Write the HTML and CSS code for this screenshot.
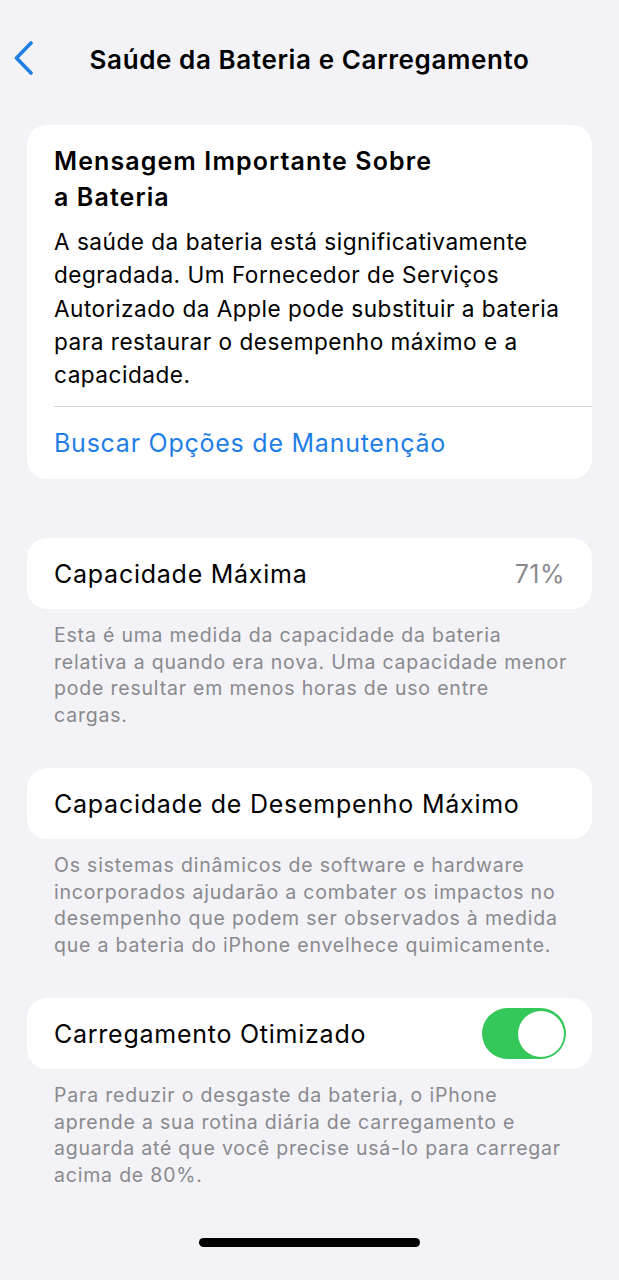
FILE: index.html
```html
<!DOCTYPE html>
<html lang="pt-BR">
<head>
<meta charset="utf-8">
<title>Saúde da Bateria e Carregamento</title>
<link rel="stylesheet" href="styles.css">
</head>
<body>
<div class="screen">
  <header class="nav">
    <svg class="back" width="22" height="34" viewBox="0 0 22 34" aria-hidden="true">
      <path d="M18 2 L3.5 17 L18 32" fill="none" stroke="#1f7ee6" stroke-width="3.6" stroke-linecap="round" stroke-linejoin="round"/>
    </svg>
    <h1 class="title">Saúde da Bateria e Carregamento</h1>
  </header>

  <main class="content">
    <section class="card message">
      <div class="message-body">
        <h2 class="msg-title">Mensagem Importante Sobre<br>a Bateria</h2>
        <p class="msg-text">A saúde da bateria está significativamente<br>degradada. Um Fornecedor de Serviços<br>Autorizado da Apple pode substituir a bateria<br>para restaurar o desempenho máximo e a<br>capacidade.</p>
      </div>
      <div class="link-row">Buscar Opções de Manutenção</div>
    </section>

    <section class="group first">
      <div class="card row">
        <span class="label">Capacidade Máxima</span>
        <span class="value">71%</span>
      </div>
      <p class="footer">Esta é uma medida da capacidade da bateria<br>relativa a quando era nova. Uma capacidade menor<br>pode resultar em menos horas de uso entre<br>cargas.</p>
    </section>

    <section class="group">
      <div class="card row">
        <span class="label">Capacidade de Desempenho Máximo</span>
      </div>
      <p class="footer">Os sistemas dinâmicos de software e hardware<br>incorporados ajudarão a combater os impactos no<br>desempenho que podem ser observados à medida<br>que a bateria do iPhone envelhece quimicamente.</p>
    </section>

    <section class="group">
      <div class="card row">
        <span class="label">Carregamento Otimizado</span>
        <span class="toggle"><span class="knob"></span></span>
      </div>
      <p class="footer">Para reduzir o desgaste da bateria, o iPhone<br>aprende a sua rotina diária de carregamento e<br>aguarda até que você precise usá-lo para carregar<br>acima de 80%.</p>
    </section>
  </main>

  <div class="home-bar"><span class="home-indicator"></span></div>
</div>
</body>
</html>
```

FILE: styles.css
```css
* { box-sizing: border-box; }

html, body {
  margin: 0;
  padding: 0;
  background: #f2f2f7;
}

body {
  font-family: Inter, "Liberation Sans", sans-serif;
  color: #000;
  -webkit-font-smoothing: antialiased;
}

.screen {
  width: 619px;
  height: 1280px;
  display: flex;
  flex-direction: column;
  overflow: hidden;
}

.nav {
  height: 125px;
  display: flex;
  align-items: flex-start;
  padding-top: 42px;
  position: relative;
}

.back {
  position: absolute;
  left: 13px;
  top: 41px;
}

.title {
  margin: 0;
  width: 100%;
  text-align: center;
  font-size: 26px;
  font-weight: 600;
  line-height: 36px;
  letter-spacing: 0.6px;
  white-space: nowrap;
}

.content {
  padding: 0 27px;
  flex: 1;
}

.card {
  background: #fff;
  border-radius: 20px;
}

.message-body {
  padding: 18px 12px 15px 27px;
}

.msg-title {
  margin: 0 0 10px;
  font-size: 25px;
  font-weight: 600;
  line-height: 36px;
  letter-spacing: 1.1px;
}

.msg-text {
  margin: 0;
  font-size: 22.6px;
  line-height: 33.3px;
  letter-spacing: 0.5px;
  white-space: nowrap;
}

.link-row {
  margin-left: 27px;
  border-top: 1px solid #d8d8dc;
  height: 73px;
  display: flex;
  align-items: center;
  font-size: 25px;
  color: #1f7ee6;
  letter-spacing: 0.75px;
}

.group.first { margin-top: 59px; }
.group { margin-top: 40px; }

.row {
  height: 71px;
  padding: 0 27px;
  display: flex;
  align-items: center;
  justify-content: space-between;
  font-size: 25px;
  letter-spacing: 0.75px;
}

.value {
  color: #8a8a8e;
  letter-spacing: 0.5px;
}

.toggle {
  width: 84px;
  height: 51px;
  border-radius: 26px;
  background: #34c759;
  display: flex;
  align-items: center;
  justify-content: flex-end;
  padding: 0 2px;
  margin-right: -1px;
}

.knob {
  width: 46px;
  height: 46px;
  border-radius: 50%;
  background: #fff;
}

.footer {
  margin: 13px 0 0;
  padding: 0 10px 0 27px;
  font-size: 19.5px;
  line-height: 26.5px;
  color: #8a8a8e;
  letter-spacing: 0.8px;
  white-space: nowrap;
}

.home-bar {
  height: 42px;
  display: flex;
  justify-content: center;
  align-items: flex-start;
}

.home-indicator {
  width: 221px;
  height: 9px;
  border-radius: 5px;
  background: #000;
}
```
